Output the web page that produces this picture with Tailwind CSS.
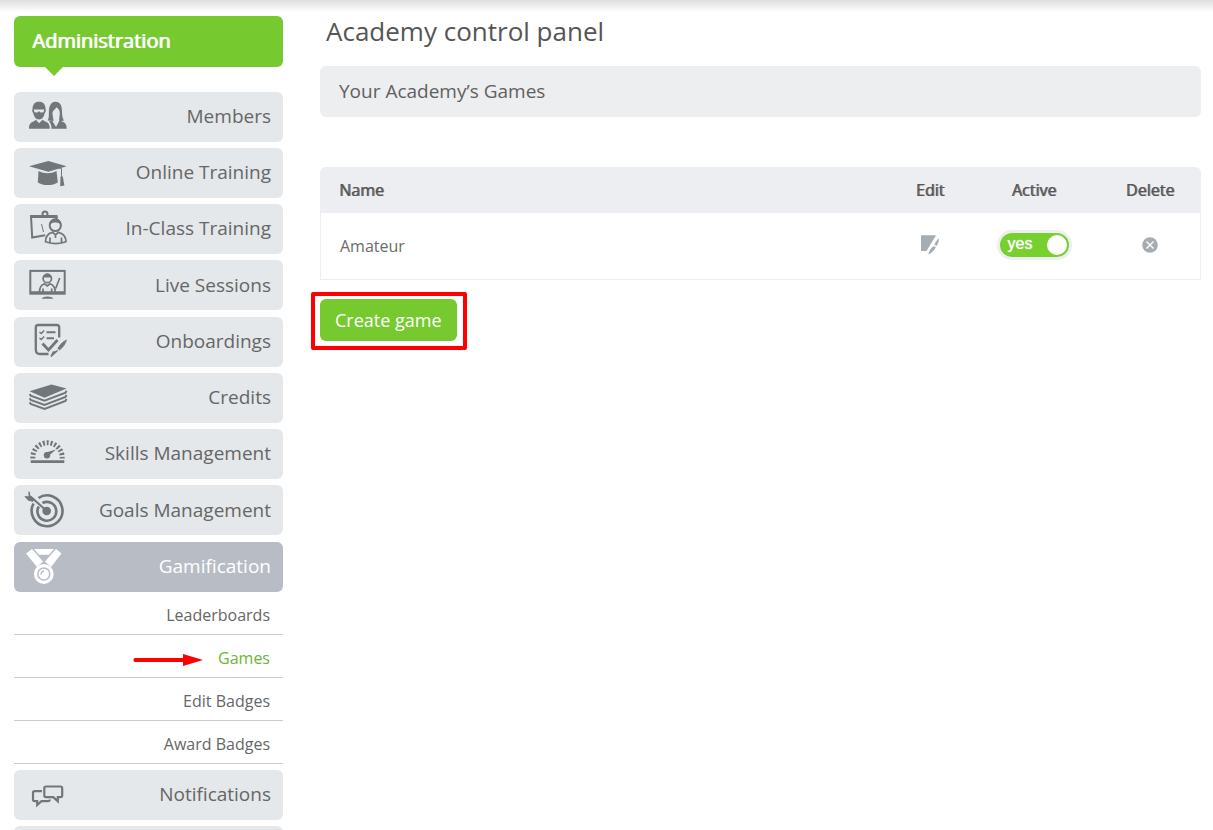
<!DOCTYPE html>
<html lang="en">
<head>
    <meta charset="utf-8">
    <meta name="viewport" content="width=device-width, initial-scale=1">
    <title>Academy control panel</title>
    <script src="https://cdn.jsdelivr.net/npm/@tailwindcss/browser@4"></script>
</head>
<body class="h-screen overflow-hidden bg-white font-['Open_Sans',sans-serif] text-[#555]">
    <div class="absolute inset-x-0 top-0 h-3 bg-linear-to-b from-[#dedede] to-white"></div>

    <div class="relative flex gap-[37px] pt-4 pr-3 pl-[14px]">
        <!-- Sidebar -->
        <aside class="w-[269px] shrink-0">
            <h2 class="relative mb-[25px] flex h-[51px] items-center rounded-md bg-[#76ca30] px-[18px] pb-[2px] text-[20px] text-white [text-shadow:1px_0_0_#fff]">
                Administration
                <svg class="absolute top-full left-[31px] h-[9px] w-[18px]" viewBox="0 0 18 9" fill="#76ca30"><path d="M0 0h18L9 9z"/></svg>
            </h2>

            <nav class="flex flex-col gap-[7px] text-[19px] text-[#666]">
                <div class="flex flex-col gap-[6px]">
                    <a href="#" class="flex h-[50px] items-center justify-between rounded-md bg-[#e4e8eb] pr-3 pb-[2px]">
                        <svg class="h-[50px] w-[70px] self-start" viewBox="0 0 70 50" fill="#70767a">
                            <path d="M18.500 17.500C18.500 12 21 9.700 25 9.700s6.600 2.300 6.600 7.800c.6 1.500 0 3-.8 3.300C30 25 28 27.500 25 27.500s-5-2.500-5.800-6.700c-.8-.3-1.400-1.800-.7-3.300z"/>
                            <path d="M20 17.500h10v1.700c-.8 1.800-3.600 1.800-4.300.2h-1.400c-.7 1.600-3.500 1.600-4.300-.2z" fill="#e4e8eb"/>
                            <path d="M15 36.700c0-5 2-6.200 5-7.400l2-1.500 3 3.500 3.500-3.500 2.300 1.500c3 1.200 5 2.400 5 7.400z"/>
                            <path d="M33.500 28.500c2.500-3 .5-9 2-13.500 1-3.500 3-5.200 6-5.200s5.200 1.500 6 5.200c1 4.500 0 10 2.500 13.500l-4.500 1c-1-2 .3-5 .3-8 0-3-.8-4.500-3.500-6.300-1 2.500-3.500 3-3.800 5.500-.2 3 1 5 1 8.300z"/>
                            <path d="M35 29.500l3-1 4 6.500 3.500-6.500c4.500 1.500 7.200 2.700 7.200 8.200H37.500c0-3-.6-5.200-2.500-7.200z"/>
                        </svg>
                        Members
                    </a>
                    <a href="#" class="flex h-[50px] items-center justify-between rounded-md bg-[#e4e8eb] pr-3 pb-[2px]">
                        <svg class="h-[50px] w-[70px] self-start" viewBox="0 0 70 50" fill="#70767a">
                            <path d="M15 18.200L34.300 13l18.400 5.200-18.400 5.500z"/>
                            <path d="M24.500 23c6 3 12 3 18 0l1.300 11.500c-5 3.400-15 3.400-20 0z"/>
                            <path d="M34.500 18l13 2.500V30" fill="none" stroke="#70767a"/>
                            <path d="M46.500 28.500h2.300l1.600 9-4.200.7z"/>
                        </svg>
                        Online Training
                    </a>
                    <a href="#" class="flex h-[50px] items-center justify-between rounded-md bg-[#e4e8eb] pr-3 pb-[2px]">
                        <svg class="h-[50px] w-[70px] self-start" viewBox="0 0 70 50" fill="none" stroke="#70767a" stroke-width="2">
                            <path d="M16 12.500h27.500" stroke-width="3"/>
                            <path d="M17 12l1.200 21.500 13-2.200M42.500 12v3"/>
                            <path d="M27.500 20l2 8" stroke-width="1"/>
                            <circle cx="31" cy="10" r="2.500"/>
                            <path d="M31.500 37.800c0-5.500 2-8.300 7-9.500l3 2.500 3-2.500c5 1.200 7.500 4 7.500 9.500-5.500 2.300-15 2.300-20.500 0zM36 33.500v5.200M47.500 33.500v5.200M41.500 31v3" stroke-width="1.700"/>
                            <circle cx="41.300" cy="21.500" r="5.600"/>
                            <path d="M35.800 20c0-7 11-7 11 0-3-2.800-8-2.800-11 0z" fill="#70767a" stroke-width="1"/>
                        </svg>
                        In-Class Training
                    </a>
                    <a href="#" class="flex h-[50px] items-center justify-between rounded-md bg-[#e4e8eb] pr-3">
                        <svg class="h-[50px] w-[70px] self-start" viewBox="0 0 70 50" fill="none" stroke="#70767a" stroke-width="1.700">
                            <rect x="16.300" y="10.900" width="34.400" height="22.700" stroke-width="2"/>
                            <path d="M16 32.800h35" stroke-width="3"/>
                            <path d="M27.500 38.700c2-3 10-3 12 0z" fill="#70767a" stroke="none"/>
                            <circle cx="33.300" cy="18.500" r="4.200"/>
                            <path d="M29.500 17c1-4 6.600-4 7.600 0z" fill="#70767a" stroke-width="1"/>
                            <path d="M25.500 32c0-5 1.500-7 5-8.200l2.800 2.200 2.700-2.200c3.500 1.200 5.200 3.200 5.200 8.200M29 28.500V32M37.700 28.500V32M45.700 18l-4 10.500"/>
                        </svg>
                        Live Sessions
                    </a>
                </div>
                <div class="flex flex-col gap-[6px]">
                    <a href="#" class="flex h-[50px] items-center justify-between rounded-md bg-[#e4e8eb] pr-3 pb-[2px]">
                        <svg class="h-[50px] w-[70px] self-start" viewBox="0 0 70 50" fill="none" stroke="#70767a" stroke-width="2.300">
                            <path d="M45.200 20.500V10.500c0-1.700-1-2.500-2.500-2.500H24.200c-1.700 0-2.400 1-2.400 2.500v22c0 2.700 1.700 4.500 4.200 4.500h8.500"/>
                            <path d="M25.500 15l1.700 1.500 3-3M25.500 21l1.700 1.500 3-3" stroke-width="1.500"/>
                            <path d="M32.500 15.300h9M32.500 21.300h7.500" stroke-width="2"/>
                            <path d="M28.500 26.500l6 6.500 9-10" stroke-width="2.800"/>
                            <path d="M52.500 23c-3.500 1.500-6.500 4.500-8.700 8.500l1.700 1.500c3.500-2.700 6-6 7-10z" fill="#70767a" stroke-width=".7"/>
                            <path d="M43.500 33.500L37 39.500l2.500-5" fill="#70767a" stroke-width="1.500"/>
                        </svg>
                        Onboardings
                    </a>
                    <a href="#" class="flex h-[50px] items-center justify-between rounded-md bg-[#e4e8eb] pr-3 pb-[2px]">
                        <svg class="h-[50px] w-[70px] self-start" viewBox="0 0 70 50" fill="none" stroke="#70767a" stroke-width="2">
                            <path d="M15.500 18.300L37.500 11.500l15 4-22 9.300z" fill="#70767a" stroke="none"/>
                            <path d="M15.700 21l1 1.800 13.800 5 21-8 1-2"/>
                            <path d="M15.700 25.200l1 1.700 13.800 5 21-8 1-2"/>
                            <path d="M15.700 29.200l1 1.700 13.800 5 21-8 1-2"/>
                        </svg>
                        Credits
                    </a>
                    <a href="#" class="flex h-[50px] items-center justify-between rounded-md bg-[#e4e8eb] pr-3 pb-[2px]">
                        <svg class="h-[50px] w-[70px] self-start" viewBox="0 0 70 50" fill="#70767a">
                            <path d="M16.700 31.300h33.600v2.700H16.700z"/>
                            <path d="M18.800 29.500v-1a14.700 14.700 0 0 1 29.400 0v1" fill="none" stroke="#70767a" stroke-width="5" stroke-dasharray="2 1.850"/>
                            <circle cx="33" cy="26.200" r="3.200"/>
                            <path d="M32 23.500l10-3-8.500 7.500z"/>
                        </svg>
                        Skills Management
                    </a>
                    <a href="#" class="flex h-[50px] items-center justify-between rounded-md bg-[#e4e8eb] pr-3">
                        <svg class="h-[50px] w-[70px] self-start" viewBox="0 0 70 50" fill="none" stroke="#70767a" stroke-width="2.600">
                            <path d="M24.500 13A15.400 15.400 0 1 1 19.500 18.500"/>
                            <path d="M28.500 18A9.400 9.400 0 1 1 24.800 21.500"/>
                            <circle cx="32.700" cy="26" r="4.300" fill="#70767a" stroke="none"/>
                            <path d="M16.500 11.500L32.700 26" stroke-width="2"/>
                            <path d="M15 6.800l1 4 3.500 3.500-.5 2-4.500-1-3.500-3.700 4 .3z" fill="#70767a" stroke-width="1"/>
                        </svg>
                        Goals Management
                    </a>
                </div>
                <div class="flex flex-col gap-[6px]">
                    <div>
                        <a href="#" class="flex h-[50px] items-center justify-between rounded-md bg-[#b8bdc5] pr-3 pb-[2px] text-white">
                            <svg class="h-[50px] w-[70px] self-start" viewBox="0 0 70 50" fill="#fff">
                                <path d="M12 11.500L18 7l11 12.500-6 5.500zM47.500 11.500L42 7 31 19.500l6 5.500zM20 7h20l-5 5.800H25z"/>
                                <circle cx="29.800" cy="32" r="8.300" fill="none" stroke="#fff" stroke-width="3.200"/>
                                <circle cx="29.800" cy="32" r="5.200"/>
                                <path d="M27 32.500c0-2 1-3 3-3.500" fill="none" stroke="#b8bdc5" stroke-width="1.300"/>
                            </svg>
                            Gamification
                        </a>
                        <div class="text-right text-[16px]">
                            <a href="#" class="flex h-[43px] items-center justify-end border-b border-[#ccc] pt-1 pr-[13px]">Leaderboards</a>
                            <a href="#" class="flex h-[43px] items-center justify-end gap-[15px] border-b border-[#ccc] pt-1 pr-[13px] text-[#6fb436]">
                                <svg class="mt-1 h-3 w-[70px]" viewBox="0 0 70 12" fill="#f00"><path d="M2 4h48V0l20 6-20 6V8H2C0 8 0 4 2 4z"/></svg>
                                Games
                            </a>
                            <a href="#" class="flex h-[43px] items-center justify-end border-b border-[#ccc] pt-1 pr-[13px]">Edit Badges</a>
                            <a href="#" class="flex h-[43px] items-center justify-end border-b border-[#ccc] pt-1 pr-[13px]">Award Badges</a>
                        </div>
                    </div>
                    <a href="#" class="flex h-[50px] items-center justify-between rounded-md bg-[#e4e8eb] pr-3 pb-[2px]">
                        <svg class="h-[50px] w-[70px] self-start" viewBox="0 0 70 50" fill="none" stroke="#70767a" stroke-width="2.200">
                            <path d="M32 16.500h14.500c1 0 1.700.7 1.700 1.700v7.300c0 1-.7 1.700-1.700 1.700h-2.700v4l-4.500-4H32c-1 0-1.700-.7-1.700-1.700v-7.300c0-1 .7-1.700 1.700-1.700z"/>
                            <path d="M28 21.200h-7.300c-1 0-1.700.7-1.700 1.700v6.600c0 1 .7 1.700 1.700 1.700h2.500V35l4.300-3.800H34c1 0 1.700-.5 1.800-1.700"/>
                        </svg>
                        Notifications
                    </a>
                    <a href="#" aria-label="More" class="block h-[50px] rounded-md bg-[#e4e8eb]"></a>
                </div>
            </nav>
        </aside>

        <!-- Content -->
        <main class="min-w-0 flex-1">
            <h1 class="pl-[6px] text-[26px] leading-[30px]">Academy control panel</h1>
            <h2 class="mt-5 flex h-[51px] items-center rounded-md bg-[#edeef0] pl-[19px] text-[19px] text-[#606060]">Your Academy’s Games</h2>

            <table class="mt-[50px] w-full border-separate border-spacing-0 text-[16px]">
                <thead>
                    <tr class="h-[46px] [text-shadow:1px_0_0_#777]">
                        <th class="rounded-tl-md bg-[#edeef2] pl-[19px] text-left font-normal">Name</th>
                        <th class="w-[78px] bg-[#edeef2] font-normal">Edit</th>
                        <th class="w-[130px] bg-[#edeef2] font-normal">Active</th>
                        <th class="w-[102px] rounded-tr-md bg-[#edeef2] font-normal">Delete</th>
                    </tr>
                </thead>
                <tbody>
                    <tr class="h-[67px]">
                        <td class="border-b border-l border-[#edeef2] pl-[19px] text-[#6c6c6c]">Amateur</td>
                        <td class="border-b border-[#edeef2] pb-[6px] text-center">
                            <button type="button" aria-label="Edit Amateur" class="align-middle">
                                <svg class="h-5 w-[18px]" viewBox="0 0 18 20" fill="#a5adb2">
                                    <path d="M0 1.500C0 .7.500.3 1 .3h13.500v1L5.500 16H1c-.6 0-1-.4-1-1z"/>
                                    <path d="M17.800 3.500c.5 2-.6 5-2.200 7.500l-2.200-1.300c1.300-2.500 2.700-5 4.400-6.200zM12.700 11l2.200 1.300c-1.700 3-4.400 6-7.400 7.200-.3-3 2.400-6 5.200-8.500z"/>
                                </svg>
                            </button>
                        </td>
                        <td class="border-b border-[#edeef2] pb-[2px] text-center">
                            <label class="relative inline-flex h-[30px] w-[75px] cursor-pointer rounded-full border-3 border-[#edeef2] bg-[#78d02f] align-middle">
                                <input type="checkbox" checked aria-label="Active" class="absolute inset-0 cursor-pointer appearance-none rounded-full">
                                <span class="pl-2 font-['Liberation_Sans',sans-serif] text-[16px] leading-[22px] text-white [text-shadow:0_0_1px_#fff]">yes</span>
                                <span class="absolute top-[2px] right-[2px] size-5 rounded-full bg-white"></span>
                            </label>
                        </td>
                        <td class="border-r border-b border-[#edeef2] pb-[6px] text-center">
                            <button type="button" aria-label="Delete Amateur" class="align-middle">
                                <svg class="size-4" viewBox="0 0 16 16"><circle cx="8" cy="8" r="7.800" fill="#a5adb2"/><path d="M4.500 4.500l7 7M11.500 4.500l-7 7" stroke="#fff" stroke-width="1.300"/></svg>
                            </button>
                        </td>
                    </tr>
                </tbody>
            </table>

            <div class="relative mt-[19px] inline-block">
                <button type="button" class="h-[42px] rounded-md bg-[#76ca30] px-[15px] text-[18px] text-white">Create game</button>
                <span class="pointer-events-none absolute -top-[7px] -right-[10px] -bottom-[9px] -left-[9px] rounded-xs border-4 border-[#f00]"></span>
            </div>
        </main>
    </div>
</body>
</html>
